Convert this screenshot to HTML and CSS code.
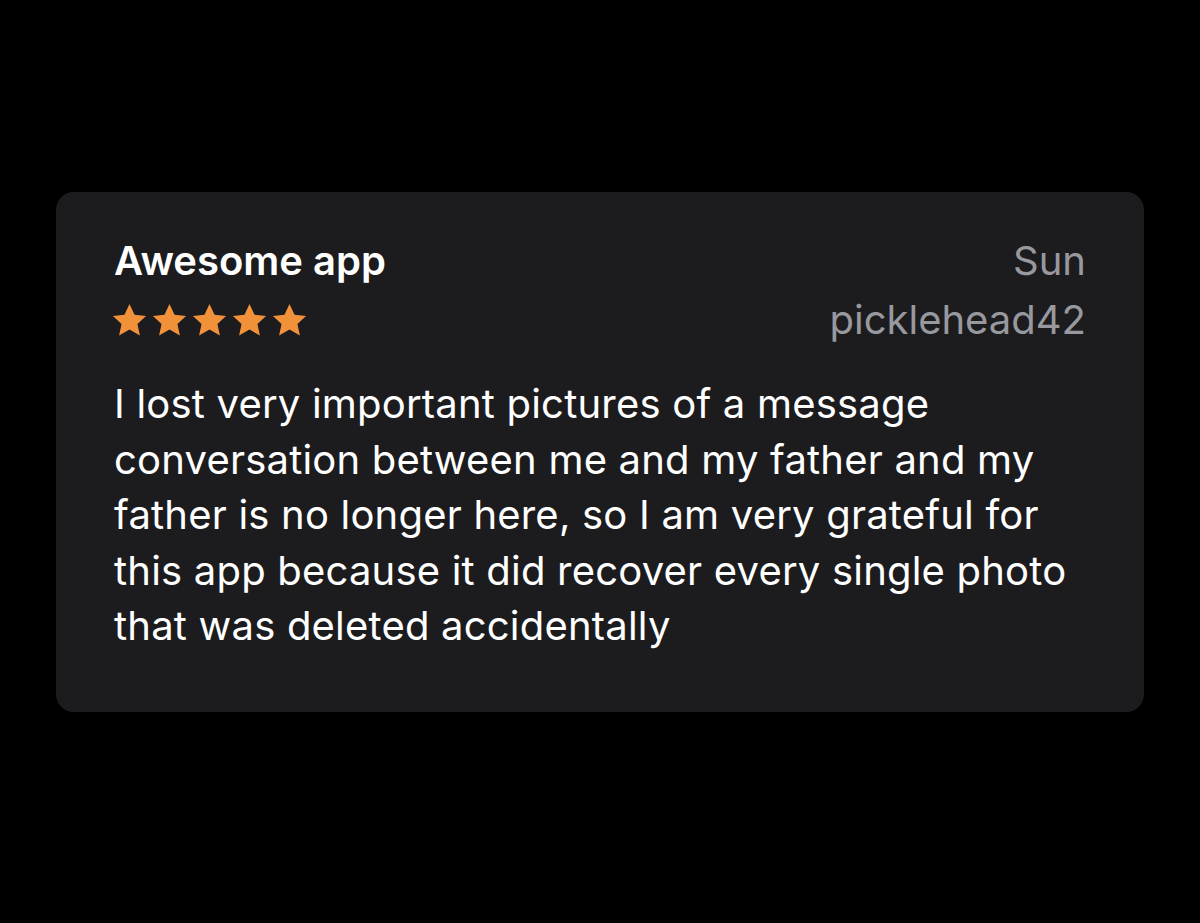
FILE: index.html
```html
<!DOCTYPE html>
<html lang="en">
<head>
  <meta charset="UTF-8">
  <title>Review</title>
  <link rel="stylesheet" href="styles.css">
</head>
<body>

  <div class="review">
    <div class="review-head">
      <div class="head-left">
        <h2 class="title">Awesome app</h2>
        <div class="stars">
          <svg viewBox="0 0 24 24"><path d="M12 1.8l3.1 6.6 7.1.8-5.3 4.9 1.5 7.1L12 17.6l-6.4 3.6 1.5-7.1-5.3-4.9 7.1-.8z"/></svg>
          <svg viewBox="0 0 24 24"><path d="M12 1.8l3.1 6.6 7.1.8-5.3 4.9 1.5 7.1L12 17.6l-6.4 3.6 1.5-7.1-5.3-4.9 7.1-.8z"/></svg>
          <svg viewBox="0 0 24 24"><path d="M12 1.8l3.1 6.6 7.1.8-5.3 4.9 1.5 7.1L12 17.6l-6.4 3.6 1.5-7.1-5.3-4.9 7.1-.8z"/></svg>
          <svg viewBox="0 0 24 24"><path d="M12 1.8l3.1 6.6 7.1.8-5.3 4.9 1.5 7.1L12 17.6l-6.4 3.6 1.5-7.1-5.3-4.9 7.1-.8z"/></svg>
          <svg viewBox="0 0 24 24"><path d="M12 1.8l3.1 6.6 7.1.8-5.3 4.9 1.5 7.1L12 17.6l-6.4 3.6 1.5-7.1-5.3-4.9 7.1-.8z"/></svg>
        </div>
      </div>
      <div class="head-right">
        <p class="date">Sun</p>
        <p class="author">picklehead42</p>
      </div>
    </div>
    <p class="body">I lost very important pictures of a message conversation between me and my father and my father is no longer here, so I am very grateful for this app because it did recover every single photo that was deleted accidentally</p>
  </div>

</body>
</html>
```

FILE: styles.css
```css
body {
  font-family: Inter, "Noto Sans", sans-serif;
  margin: 0;
  padding: 0;
  background-color: #000;
  height: 100vh;
  overflow: hidden;
}

.review {
  background-color: #1c1c1e;
  margin: 192px 56px 0 56px;
  height: 520px;
  box-sizing: border-box;
  border-radius: 18px;
  padding: 45px 58px 0 58px;
}

.review-head {
  display: flex;
  justify-content: space-between;
  height: 108px;
}

.title {
  color: #fff;
  font-size: 40px;
  font-weight: 600;
  line-height: 48px;
  margin: 0;
}

.stars {
  display: flex;
  gap: 1px;
  margin-top: 16px;
  margin-left: -4px;
}

.stars svg {
  width: 39px;
  height: 39px;
  fill: #f1923b;
}

.head-right {
  text-align: right;
}

.date,
.author {
  color: #98989f;
  font-size: 40px;
  line-height: 48px;
  margin: 0;
}

.author {
  margin-top: 11px;
}

.body {
  color: #fff;
  font-size: 40px;
  line-height: 55.5px;
  letter-spacing: 0.2px;
  max-width: 960px;
  margin: 31px 0 0 0;
}
```
